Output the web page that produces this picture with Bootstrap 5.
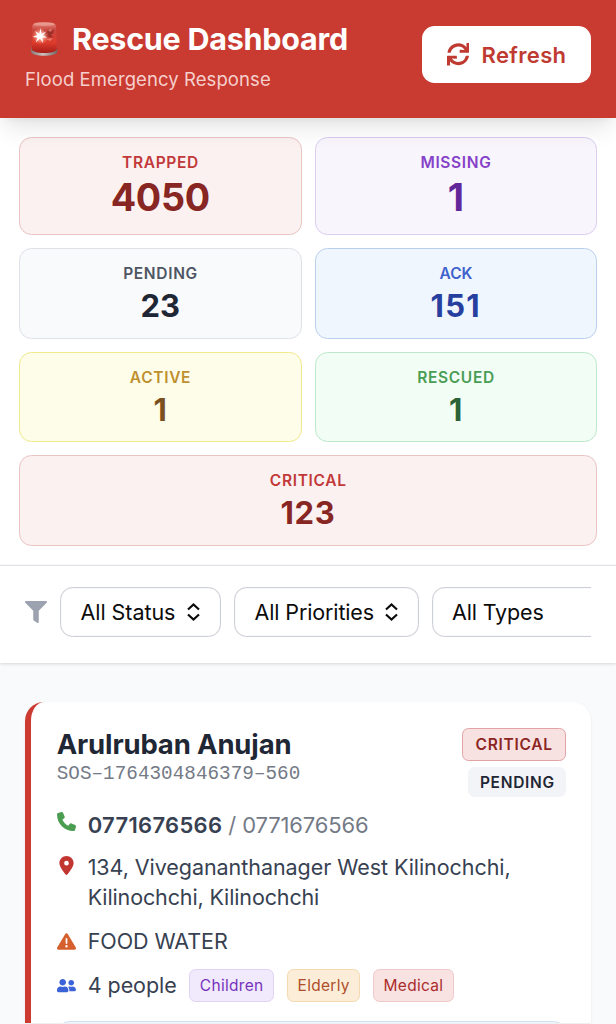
<!DOCTYPE html>
<html lang="en">
<head>
<meta charset="utf-8">
<meta name="viewport" content="width=device-width, initial-scale=1">
<title>Rescue Dashboard</title>
<link href="https://cdn.jsdelivr.net/npm/bootstrap@5.3.0/dist/css/bootstrap.min.css" rel="stylesheet">
<style>
body{font-family:Inter,"Liberation Sans",sans-serif;background:#f8fafc;color:#374151;height:1024px;overflow:hidden}
svg{display:block;flex:none}
.topbar{background:#c93a31;height:117.5px;padding:21px 25px 0;z-index:2;box-shadow:0 15px 22px -5px rgba(0,0,0,.1),0 5px 9px -5px rgba(0,0,0,.08)}
.topbar h1{font-size:30.5px;font-weight:700;line-height:36px;color:#fff;letter-spacing:-.25px;gap:12px}
.subtitle{font-size:18.5px;line-height:24px;color:#f5d0cc;letter-spacing:.08px;margin-top:10px}
.btn-refresh{--bs-btn-bg:#fff;--bs-btn-color:#bf3a30;--bs-btn-hover-bg:#fff;--bs-btn-hover-color:#bf3a30;width:169px;height:57px;border-radius:12.5px;border:0;margin-top:5px;padding:0 0 0 24.5px;font-size:22px;font-weight:600;letter-spacing:.35px;gap:12.5px}
.btn-refresh span{padding-top:1px}
.stats{background:#fff;padding:19px 19px 0;height:447.2px}
.stat-grid{display:grid;grid-template-columns:1fr 1fr;gap:13px}
.stat{border:1px solid;border-radius:12.5px;height:90.5px;padding-top:12px;text-align:center}
.stat.tall{height:98.5px}
.stat-label{font-size:15.5px;font-weight:600;line-height:25px;letter-spacing:.67px;padding-left:.5px}
.stat-num{font-size:31px;font-weight:700;line-height:39px}
.tall .stat-num{font-size:37.7px;line-height:44px;letter-spacing:-.3px}
.s-red{background:#fbf1f0;border-color:#eac3c3}.s-red .stat-label{color:#c2393a}.s-red .stat-num{color:#872622}
.s-purple{background:#f8f5fd;border-color:#dacdef}.s-purple .stat-label{color:#8541c8}.s-purple .stat-num{color:#61279b}
.s-gray{background:#f9fafc;border-color:#dfe1e7}.s-gray .stat-label{color:#4e5663}.s-gray .stat-num{color:#1f2735}
.s-blue{background:#eff6fe;border-color:#b9d0ec}.s-blue .stat-label{color:#3f62cd}.s-blue .stat-num{color:#273f9f}
.s-yellow{background:#fefde9;border-color:#f0e98e}.s-yellow .stat-label{color:#be902f}.s-yellow .stat-num{color:#7a5020}
.s-green{background:#f2fdf5;border-color:#bde8ca}.s-green .stat-label{color:#4a9d56}.s-green .stat-num{color:#2c6238}
.filters{background:#fff;height:98.5px;border-top:1px solid #dfe1e6;padding:21px 25px 0;z-index:1;box-shadow:0 1px 3px rgba(0,0,0,.15)}
.filter-row{overflow:hidden;gap:13px}
.pick{flex:none;height:50px;border:1px solid #cccfd6;border-radius:12.5px;background:#fff;color:#0b0b0c;padding:0 20px 0 19.5px;font-size:21.5px;letter-spacing:-.05px;display:flex;align-items:center;justify-content:space-between;box-shadow:0 0 1px rgba(120,124,136,.4) inset}
.case{margin:38.5px 25px 0;background:#fff;border-left:6.3px solid #cd3a31;border-radius:19px 19px 0 0;padding:26px 25px 0 25.7px;height:321px;overflow:hidden;box-shadow:0 1px 3px rgba(0,0,0,.07)}
.case h2{font-size:27.5px;font-weight:700;line-height:33px;color:#1f2735;letter-spacing:-.15px;margin:0}
.case-id{font-family:"Liberation Mono",monospace;font-size:19.3px;line-height:27px;color:#747a86;letter-spacing:.03px}
.tag{border-radius:6.5px;font-size:15.5px;font-weight:600;letter-spacing:.7px;display:flex;align-items:center;justify-content:center;padding-left:.7px}
.tag-critical{width:104.5px;height:33px;background:#f8e1e1;border:1px solid #e3a3a5;color:#8c2523}
.tag-pending{width:98px;height:30px;background:#f3f4f7;color:#1f2735}
.line{display:grid;grid-template-columns:19px 1fr;column-gap:12px;font-size:21.5px;line-height:30px}
.chip{height:33px;border:1px solid;border-radius:6.5px;font-size:15.5px;display:flex;align-items:center;justify-content:center;letter-spacing:.3px}
.note{height:60px;border:1px solid #cfe0f2;background:#eff6fe;border-radius:12.5px;margin-top:18.5px}
</style>
</head>
<body>
<header class="topbar position-relative d-flex justify-content-between align-items-start">
  <div>
    <h1 class="d-flex align-items-center m-0">
      <svg width="35" height="36" viewBox="0 0 35 36" aria-hidden="true">
        <defs>
          <linearGradient id="dome" x1="0" y1="0" x2="0" y2="1"><stop offset="0" stop-color="#e78b7f"/><stop offset=".25" stop-color="#c9473f"/><stop offset=".65" stop-color="#df3c2d"/><stop offset="1" stop-color="#a71d18"/></linearGradient>
          <radialGradient id="glow"><stop offset="0" stop-color="#fff"/><stop offset=".4" stop-color="#ffc1b0" stop-opacity=".8"/><stop offset="1" stop-color="#ff8a70" stop-opacity="0"/></radialGradient>
          <linearGradient id="base" x1="0" x2="1"><stop offset="0" stop-color="#817877"/><stop offset=".45" stop-color="#ccc1be"/><stop offset="1" stop-color="#6f6765"/></linearGradient>
        </defs>
        <path d="M6.500 26h25.200l.6 4.500c0 3-7 4.300-13.200 4.300S6 33.500 6 30.500z" fill="url(#base)"/>
        <path d="M7.300 6C7.300 2.400 9.500 1.300 19 1.300S31 2.400 31.200 6l.6 22c-.3 2.800-5.800 4-12.600 4S7 30.500 6.800 28z" fill="url(#dome)"/>
        <ellipse cx="19.200" cy="3.300" rx="10.500" ry="1.700" fill="#f2b6aa" opacity=".5"/>
        <path d="M18 8l4 3 2-3 2 3 3-3-1 5-2 0 2 4-4-1-3 1z" fill="#7f201d" opacity=".6"/>
        <path d="M23 9l4-1.500-2 3.500zM21 18l7-1-3 3z" fill="#f2a195" opacity=".6"/>
        <circle cx="15.500" cy="15" r="8.500" fill="url(#glow)"/>
        <path d="M15.500 7l1 6 4.500-2.500-3.200 4 4.600 2-5.100.1.700 5.500-3-4.500-4.300 4 1.900-5.200-5.200-.5 5-1.900L10 10l4.300 2.800z" fill="#fff"/>
      </svg>
      <span>Rescue Dashboard</span>
    </h1>
    <div class="subtitle">Flood Emergency Response</div>
  </div>
  <button class="btn btn-refresh d-flex align-items-center" type="button">
    <svg width="22.500" height="22.500" viewBox="0 0 512 512" fill="currentColor"><path d="M440.650 12.570l4 82.770A247.160 247.160 0 0 0 255.830 8C134.730 8 33.910 94.920 12.290 209.820A12 12 0 0 0 24.090 224h49.050a12 12 0 0 0 11.670-9.260 175.910 175.910 0 0 1 317-56.940l-101.460-4.860a12 12 0 0 0-12.570 12v47.410a12 12 0 0 0 12 12H500a12 12 0 0 0 12-12V12a12 12 0 0 0-12-12h-47.370a12 12 0 0 0-11.980 12.570zM255.830 432a175.610 175.610 0 0 1-146-77.800l101.800 4.870a12 12 0 0 0 12.570-12v-47.400a12 12 0 0 0-12-12H12a12 12 0 0 0-12 12V500a12 12 0 0 0 12 12h47.350a12 12 0 0 0 12-12.600l-4.150-82.570A247.170 247.170 0 0 0 255.830 504c121.110 0 221.930-86.920 243.550-201.820a12 12 0 0 0-11.800-14.180h-49.050a12 12 0 0 0-11.670 9.260A175.860 175.860 0 0 1 255.830 432z"/></svg>
    <span>Refresh</span>
  </button>
</header>

<section class="stats">
  <div class="stat-grid">
    <div class="stat tall s-red"><div class="stat-label">TRAPPED</div><div class="stat-num">4050</div></div>
    <div class="stat tall s-purple"><div class="stat-label">MISSING</div><div class="stat-num">1</div></div>
    <div class="stat s-gray"><div class="stat-label">PENDING</div><div class="stat-num">23</div></div>
    <div class="stat s-blue"><div class="stat-label" style="letter-spacing:0">ACK</div><div class="stat-num" style="letter-spacing:1.300px">151</div></div>
    <div class="stat s-yellow"><div class="stat-label">ACTIVE</div><div class="stat-num">1</div></div>
    <div class="stat s-green"><div class="stat-label">RESCUED</div><div class="stat-num">1</div></div>
    <div class="stat s-red" style="grid-column:span 2"><div class="stat-label">CRITICAL</div><div class="stat-num" style="letter-spacing:.7px">123</div></div>
  </div>
</section>

<section class="filters position-relative">
  <div class="filter-row d-flex align-items-center">
    <svg width="22" height="22" viewBox="0 0 512 512" fill="#9ca2af"><path d="M487.976 0H24.028C2.710 0-8.047 25.866 7.058 40.971L192 225.941V432c0 7.831 3.821 15.170 10.237 19.662l80 55.980C298.020 518.690 320 507.493 320 487.980V225.941l184.947-184.970C520.021 25.896 509.338 0 487.976 0z"/></svg>
    <button type="button" class="pick" style="width:161px"><span>All Status</span><svg width="13" height="18" viewBox="0 0 13 18" fill="none" stroke="currentColor" stroke-width="2.200"><path d="M1 6.500l5.500-5 5.500 5M1 11.500l5.500 5 5.500-5"/></svg></button>
    <button type="button" class="pick" style="width:184.500px;letter-spacing:-.13px"><span>All Priorities</span><svg width="13" height="18" viewBox="0 0 13 18" fill="none" stroke="currentColor" stroke-width="2.200"><path d="M1 6.500l5.500-5 5.500 5M1 11.500l5.500 5 5.500-5"/></svg></button>
    <button type="button" class="pick" style="width:200px;letter-spacing:-.15px"><span>All Types</span></button>
  </div>
</section>

<main>
  <article class="case">
    <div class="d-flex justify-content-between align-items-start">
      <div>
        <h2>Arulruban Anujan</h2>
        <div class="case-id">SOS–1764304846379–560</div>
      </div>
      <div class="d-flex flex-column align-items-end" style="gap:6.500px">
        <span class="tag tag-critical">CRITICAL</span>
        <span class="tag tag-pending">PENDING</span>
      </div>
    </div>
    <div class="line" style="margin-top:12.500px">
      <svg width="19" height="19" viewBox="0 0 512 512" fill="#4a9d51" style="margin-top:2px"><path d="M164.900 24.600c-7.700-18.600-28-28.500-47.400-23.200l-88 24C12.100 30.200 0 46 0 64C0 311.400 200.600 512 448 512c18 0 33.800-12.100 38.600-29.500l24-88c5.300-19.400-4.600-39.700-23.200-47.400l-96-40c-16.300-6.800-35.200-2.100-46.300 11.600L304.700 368C234.300 334.700 177.300 277.700 144 207.300L193.300 167c13.700-11.200 18.400-30 11.600-46.300l-40-96z"/></svg>
      <div style="font-size:22px"><span class="fw-semibold" style="letter-spacing:.3px">0771676566</span><span style="color:#747a86;letter-spacing:-.15px"> / 0771676566</span></div>
    </div>
    <div class="line" style="margin-top:12.500px">
      <svg width="19" height="19" viewBox="0 0 384 512" fill="#c23632" style="margin-top:3.500px"><path d="M215.700 499.200C267 435 384 279.400 384 192C384 86 298 0 192 0S0 86 0 192c0 87.400 117 243 168.300 307.200c12.300 15.300 35.100 15.300 47.400 0zM192 128a64 64 0 1 1 0 128 64 64 0 1 1 0-128z"/></svg>
      <div style="letter-spacing:-.06px">134, Vivegananthanager West Kilinochchi,<br><span style="letter-spacing:-.13px">Kilinochchi, Kilinochchi</span></div>
    </div>
    <div class="line" style="margin-top:14px">
      <svg width="19" height="19" viewBox="0 0 512 512" fill="#d6602d" style="margin-top:5.500px"><path d="M256 32c14.200 0 27.300 7.500 34.500 19.800l216 368c7.300 12.400 7.300 27.700 .2 40.100S486.300 480 472 480H40c-14.300 0-27.600-7.700-34.700-20.100s-7-27.800 .2-40.100l216-368C228.700 39.500 241.800 32 256 32zm0 128c-13.300 0-24 10.700-24 24V296c0 13.300 10.700 24 24 24s24-10.700 24-24V184c0-13.300-10.700-24-24-24zm32 224a32 32 0 1 0-64 0 32 32 0 1 0 64 0z"/></svg>
      <div style="letter-spacing:-.08px">FOOD WATER</div>
    </div>
    <div class="line align-items-center" style="margin-top:13px;line-height:33px">
      <svg width="19" height="15.200" viewBox="0 0 640 512" fill="#3b62d6"><path d="M192 256c61.900 0 112-50.100 112-112S253.900 32 192 32 80 82.100 80 144s50.100 112 112 112zm76.800 32h-8.300c-20.800 10-43.900 16-68.500 16s-47.600-6-68.500-16h-8.300C51.600 288 0 339.600 0 403.200V432c0 26.500 21.500 48 48 48h288c26.500 0 48-21.500 48-48v-28.800c0-63.600-51.600-115.200-115.200-115.200zM480 256c53 0 96-43 96-96s-43-96-96-96-96 43-96 96 43 96 96 96zm48 32h-3.800c-13.900 4.800-28.600 8-44.200 8s-30.300-3.200-44.200-8H432c-20.400 0-39.200 5.900-55.700 15.400 24.400 26.300 39.700 61.200 39.700 99.800v38.400c0 2.200-.5 4.300-.6 6.400H592c26.500 0 48-21.500 48-48 0-61.900-50.100-112-112-112z"/></svg>
      <div class="d-flex" style="gap:13px">
        <span style="width:88.500px;white-space:nowrap;letter-spacing:-.05px">4 people</span>
        <span class="chip" style="width:85px;background:#f1e9fc;border-color:#e0d3f5;color:#7633bd">Children</span>
        <span class="chip" style="width:73px;background:#fcedd8;border-color:#f4d9b0;color:#ae4f2a">Elderly</span>
        <span class="chip" style="width:80.500px;background:#f8e2e2;border-color:#efc8c9;color:#ab2c2c">Medical</span>
      </div>
    </div>
    <div class="note"></div>
  </article>
</main>
<script src="https://cdn.jsdelivr.net/npm/bootstrap@5.3.0/dist/js/bootstrap.bundle.min.js"></script>
</body>
</html>
